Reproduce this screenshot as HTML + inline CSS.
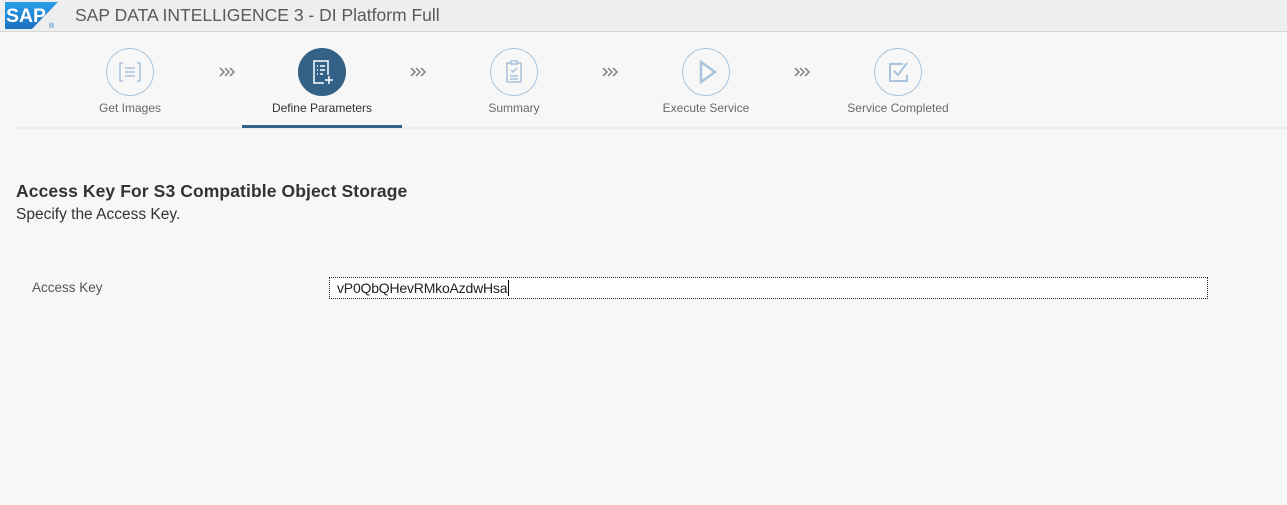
<!DOCTYPE html>
<html><head><style>
*{margin:0;padding:0;box-sizing:border-box}
body{width:1287px;height:505px;background:#f7f7f7;font-family:"Liberation Sans",sans-serif;position:relative;overflow:hidden}
.hdr{position:absolute;left:0;top:0;width:1287px;height:32px;background:#eeeeee;border-bottom:1px solid #d6d6d6}
.title{position:absolute;left:75px;top:5px;font-size:17.5px;color:#5a5a5a}
.c{position:absolute;top:48px;width:48px;height:48px;border-radius:50%;border:1px solid #a9c4dc;background:#f7f7f7}
.c.a{background:#346187;border-color:#346187}
.c svg{position:absolute;left:-1px;top:-1px}
.lbl{position:absolute;top:101px;font-size:12px;color:#6a6a6a;width:200px;text-align:center}
.chev{position:absolute;top:66px}
</style></head><body>
<div class="hdr">
<svg width="53" height="27" style="position:absolute;left:5px;top:2px" viewBox="0 0 53 27"><defs><linearGradient id="g" x1="0" y1="0" x2="0" y2="1"><stop offset="0" stop-color="#2aa0e8"/><stop offset="1" stop-color="#1a6fc0"/></linearGradient></defs><polygon points="0,0 53,0 27,27 0,27" fill="url(#g)"/><text x="1" y="20" font-family="Liberation Sans" font-weight="bold" font-size="19" fill="#fff" textLength="40" lengthAdjust="spacingAndGlyphs">SAP</text><text x="44" y="26" font-size="7" fill="#1a6fc0" font-family="Liberation Sans">®</text></svg>
<div class="title">SAP DATA INTELLIGENCE 3 - DI Platform Full</div>
</div>

<div class="c" style="left:106px"><svg width="48" height="48" viewBox="0 0 48 48" fill="none" stroke="#a9c4dc" stroke-width="1.5"><path d="M17 15h-3v18h3M31 15h3v18h-3M19 20h10M19 24h10M19 28h10"/></svg></div>
<div class="c a" style="left:298px"><svg width="48" height="48" viewBox="0 0 48 48" fill="none" stroke="#fff" stroke-width="1.5"><path d="M30 27v-14h-14v22h10M19 18h1M22 18h5M19 22h1M22 22h5M19 26h1M22 26h3M31 28v8M27 32h8"/></svg></div>
<div class="c" style="left:490px"><svg width="48" height="48" viewBox="0 0 48 48" fill="none" stroke="#a9c4dc" stroke-width="1.5"><path d="M21 15h-4v19h14v-19h-4M21 13h6v3h-6zM20 28h8M20 31h8M21 22l2 2 4-4"/></svg></div>
<div class="c" style="left:682px"><svg width="48" height="48" viewBox="0 0 48 48" fill="none" stroke="#a9c4dc" stroke-width="2.5"><path d="M19 14v20l14-10z"/></svg></div>
<div class="c" style="left:874px"><svg width="48" height="48" viewBox="0 0 48 48" fill="none" stroke="#a9c4dc" stroke-width="2"><path d="M29 16h-13v17h17v-6M20 23l4 4 9-12"/></svg></div>

<svg class="chev" style="left:219px" width="16" height="12" viewBox="0 0 16 12" fill="none" stroke="#8a8a8a" stroke-width="1.6"><path d="M1 2l4 4-4 4M6 2l4 4-4 4M11 2l4 4-4 4"/></svg>
<svg class="chev" style="left:410px" width="16" height="12" viewBox="0 0 16 12" fill="none" stroke="#8a8a8a" stroke-width="1.6"><path d="M1 2l4 4-4 4M6 2l4 4-4 4M11 2l4 4-4 4"/></svg>
<svg class="chev" style="left:602px" width="16" height="12" viewBox="0 0 16 12" fill="none" stroke="#8a8a8a" stroke-width="1.6"><path d="M1 2l4 4-4 4M6 2l4 4-4 4M11 2l4 4-4 4"/></svg>
<svg class="chev" style="left:794px" width="16" height="12" viewBox="0 0 16 12" fill="none" stroke="#8a8a8a" stroke-width="1.6"><path d="M1 2l4 4-4 4M6 2l4 4-4 4M11 2l4 4-4 4"/></svg>

<div class="lbl" style="left:30px">Get Images</div>
<div class="lbl" style="left:222px;color:#333">Define Parameters</div>
<div class="lbl" style="left:414px">Summary</div>
<div class="lbl" style="left:606px">Execute Service</div>
<div class="lbl" style="left:798px">Service Completed</div>

<div style="position:absolute;left:16px;top:127px;width:1271px;height:2px;background:#eaeef2"></div>
<div style="position:absolute;left:242px;top:125px;width:160px;height:3px;background:#346187"></div>

<div style="position:absolute;left:16px;top:181px;font-size:17.5px;font-weight:bold;color:#333;letter-spacing:0.1px">Access Key For S3 Compatible Object Storage</div>
<div style="position:absolute;left:16px;top:206px;font-size:15.5px;color:#333">Specify the Access Key.</div>
<div style="position:absolute;left:32px;top:280px;font-size:13.5px;color:#555">Access Key</div>
<div style="position:absolute;left:329px;top:277px;width:879px;height:22px;background:#fff;border:1px dotted #222;font-size:14px;color:#222;padding:2px 0 0 7px;letter-spacing:-0.2px">vP0QbQHevRMkoAzdwHsa<span style="border-left:1px solid #000;margin-left:1px"></span></div>
</body></html>
